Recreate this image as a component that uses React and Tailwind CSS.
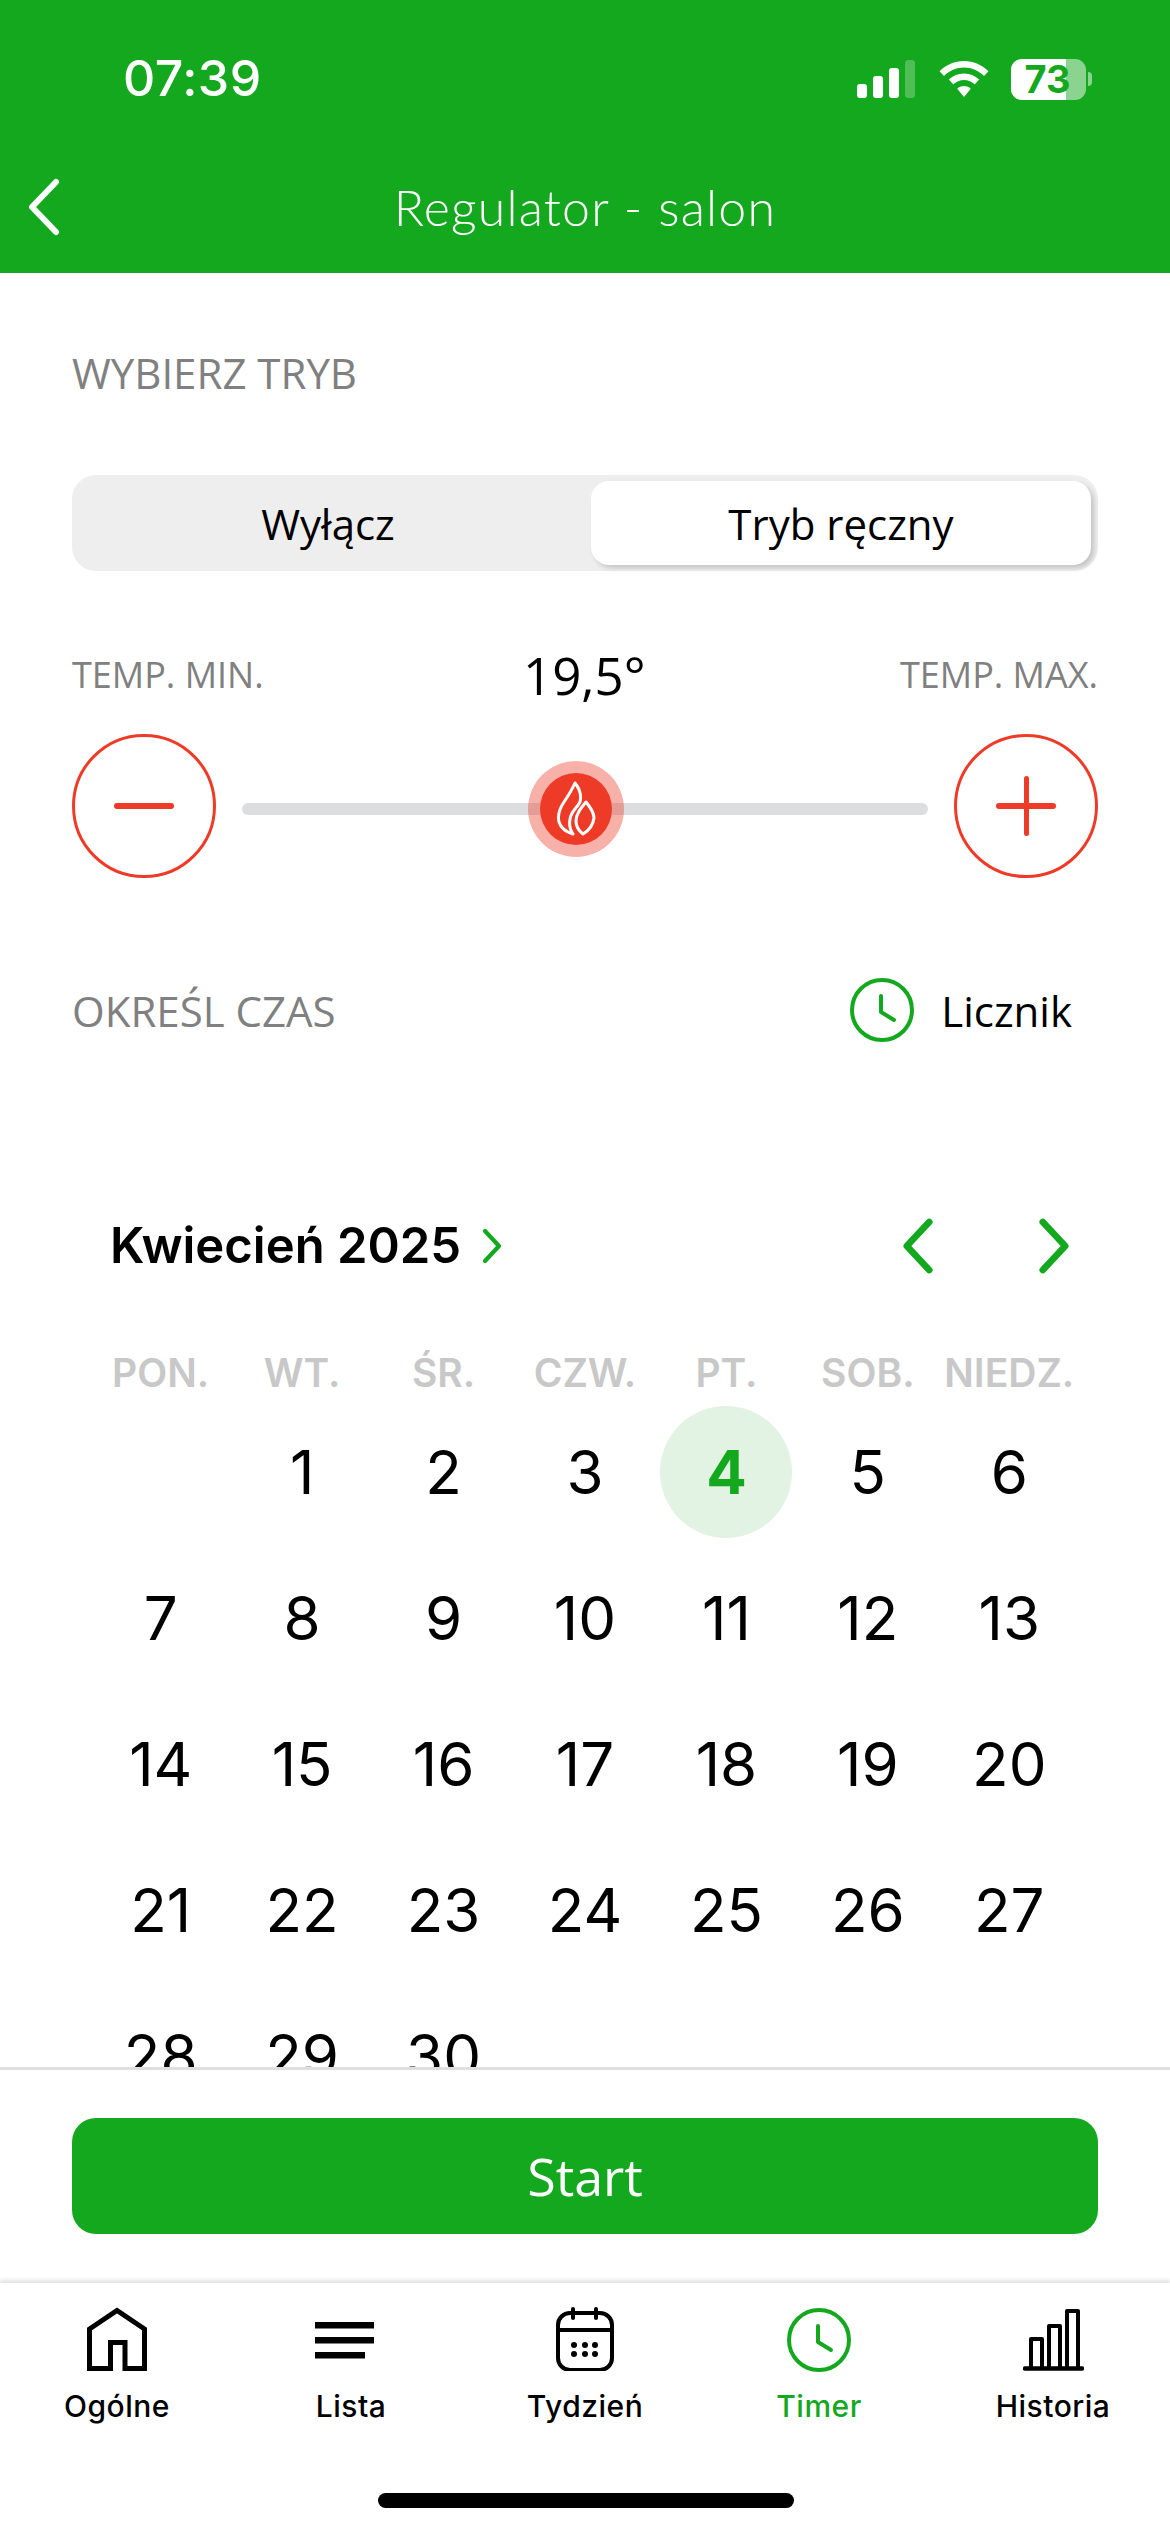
const weekDays = ['PON.', 'WT.', 'ŚR.', 'CZW.', 'PT.', 'SOB.', 'NIEDZ.']
const days = ['', 1, 2, 3, 4, 5, 6, 7, 8, 9, 10, 11, 12, 13, 14, 15, 16, 17, 18, 19, 20, 21, 22, 23, 24, 25, 26, 27, 28, 29, 30]

function Chevron({ dir = 'right', className = '' }) {
  return (
    <svg viewBox="0 0 20 36" fill="none" className={className}>
      <path
        d={dir === 'right' ? 'M3 3 L17 18 L3 33' : 'M17 3 L3 18 L17 33'}
        stroke="currentColor"
        strokeWidth="4.200"
        strokeLinecap="round"
        strokeLinejoin="round"
      />
    </svg>
  )
}

function ClockIcon({ className = '' }) {
  return (
    <svg viewBox="0 0 64 64" fill="none" className={className}>
      <circle cx="32" cy="32" r="30" stroke="currentColor" strokeWidth="4" />
      <path d="M31 18V34L44 42" stroke="currentColor" strokeWidth="4" strokeLinecap="round" strokeLinejoin="round" />
    </svg>
  )
}

function StatusBar() {
  return (
    <div className="h-[154px] flex items-start justify-between pl-[123px] pr-[78px] pt-[53px] text-white">
      <span className="text-[50px] leading-[50px] font-medium font-['Inter',sans-serif] tracking-[0.5px]">07:39</span>
      <div className="flex items-center gap-[22px] h-[44px] mt-[4px]">
        <svg viewBox="0 0 60 38" className="w-[60px] h-[38px]">
          <rect x="0" y="24" width="10" height="14" rx="3" fill="#fff" />
          <rect x="16" y="16" width="10" height="22" rx="3" fill="#fff" />
          <rect x="32" y="8" width="10" height="30" rx="3" fill="#fff" />
          <rect x="48" y="0" width="10" height="38" rx="3" fill="#fff" fillOpacity="0.25" />
        </svg>
        <svg viewBox="0 0 50 36" className="w-[50px] h-[36px]">
          <path d="M25 0C15.500 0 7 3.800 0.500 10.200L5 15C10.300 9.800 17.300 6.600 25 6.600C32.700 6.600 39.700 9.800 45 15L49.500 10.200C43 3.800 34.500 0 25 0Z" fill="#fff" />
          <path d="M25 12.500C19.200 12.500 14 14.800 9.900 18.600L14.300 23.400C17.200 20.700 20.900 19.100 25 19.100C29.100 19.100 32.800 20.700 35.700 23.400L40.100 18.600C36 14.800 30.800 12.500 25 12.500Z" fill="#fff" />
          <path d="M25 25C22.400 25 20 26 18.200 27.700L25 36L31.800 27.700C30 26 27.600 25 25 25Z" fill="#fff" />
        </svg>
        <div className="relative flex items-center">
          <div className="relative w-[75px] h-[41px] rounded-[11px] bg-white/50">
            <div className="h-full w-[55px] rounded-l-[11px] bg-white" />
            <span className="absolute inset-0 flex items-center justify-center pr-[2px] text-[38px] leading-none font-bold font-['Inter',sans-serif] text-[#14a81f]">73</span>
          </div>
          <div className="ml-[2px] w-[4px] h-[14px] rounded-r-full bg-white/50" />
        </div>
      </div>
    </div>
  )
}

function Header() {
  return (
    <div className="bg-[#14a81f] h-[273px] shrink-0">
      <StatusBar />
      <div className="relative h-[119px] flex items-start justify-center pt-[28px]">
        <svg viewBox="0 0 34 58" fill="none" className="absolute left-[27px] top-[24px] w-[34px] h-[58px]">
          <path d="M29 4 L5 29 L29 54" stroke="#fff" strokeWidth="6" strokeLinecap="round" strokeLinejoin="round" />
        </svg>
        <span className="text-white text-[50px] leading-[50px] font-light font-['Lato',sans-serif] tracking-[1.2px]">Regulator - salon</span>
      </div>
    </div>
  )
}

function FlameIcon() {
  return (
    <svg viewBox="0 0 40 55" fill="none" className="w-[40px] h-[55px]">
      <path
        d="M19 2C23 7 26 13 24 21C21 27 15 30 14 38C13 44 14 49 17 53C10 51 5 47 3 41C1 33 4 27 8 21C12 15 16 9 19 2Z"
        stroke="#fff"
        strokeWidth="3"
        strokeLinejoin="round"
      />
      <path
        d="M30 21C34 26 38 31 38 37C37 45 32 50 27 53C23 50 20 46 20 40C20 33 25 27 30 21Z"
        stroke="#fff"
        strokeWidth="3"
        strokeLinejoin="round"
      />
    </svg>
  )
}

function TempControl() {
  return (
    <div className="mt-[74px]">
      <div className="flex items-center justify-between h-[60px]">
        <span className="text-[36px] text-[#808080]">TEMP. MIN.</span>
        <span className="text-[51px] text-black ml-[5px]">19,5°</span>
        <span className="text-[36px] text-[#808080]">TEMP. MAX.</span>
      </div>
      <div className="flex items-center justify-between mt-[29px]">
        <div className="w-[144px] h-[144px] rounded-full border-[3px] border-[#ee3b28] flex items-center justify-center">
          <div className="w-[60px] h-[6px] rounded-full bg-[#ee3b28]" />
        </div>
        <div className="relative w-[686px] h-[12px] mt-[5px] rounded-full bg-[#dcdddf]">
          <div className="absolute left-[286px] top-[-42px] w-[96px] h-[96px] rounded-full bg-[#ee3b28]/40 flex items-center justify-center">
            <div className="w-[72px] h-[72px] rounded-full bg-[#ee3b28] flex items-center justify-center">
              <FlameIcon />
            </div>
          </div>
        </div>
        <div className="relative w-[144px] h-[144px] rounded-full border-[3px] border-[#ee3b28] flex items-center justify-center">
          <div className="w-[60px] h-[6px] rounded-full bg-[#ee3b28]" />
          <div className="absolute w-[5px] h-[60px] rounded-full bg-[#ee3b28]" />
        </div>
      </div>
    </div>
  )
}

function Calendar() {
  return (
    <div className="mt-[171px]">
      <div className="flex items-center justify-between pl-[38px] pr-[28px] h-[60px]">
        <div className="flex items-center gap-[20px]">
          <span className="text-[49px] font-semibold text-black font-['Inter',sans-serif]">Kwiecień 2025</span>
          <Chevron className="w-[22px] h-[36px] text-[#14a81f]" />
        </div>
        <div className="flex items-center gap-[104px]">
          <Chevron dir="left" className="w-[32px] h-[58px] text-[#14a81f]" />
          <Chevron className="w-[32px] h-[58px] text-[#14a81f]" />
        </div>
      </div>
      <div className="grid grid-cols-7 mt-[75px] mx-[18px] font-['Inter',sans-serif]">
        {weekDays.map((d) => (
          <div key={d} className="text-center whitespace-nowrap text-[39px] leading-[44px] font-semibold text-[#c8c8c8]">{d}</div>
        ))}
      </div>
      <div className="grid grid-cols-7 mt-[4px] mx-[18px] font-['Inter',sans-serif]">
        {days.map((d, i) => (
          <div key={i} className="h-[146px] flex items-center justify-center">
            {d === 4 ? (
              <div className="w-[132px] h-[132px] rounded-full bg-[#e2f3e3] flex items-center justify-center text-[60px] font-bold text-[#14a81f]">{d}</div>
            ) : (
              <span className="text-[60px] text-black">{d}</span>
            )}
          </div>
        ))}
      </div>
    </div>
  )
}

function TabIcon({ name }) {
  if (name === 'home') {
    return (
      <svg viewBox="0 0 60 66" fill="none" className="w-[60px] h-[66px]">
        <path d="M2.500 63.500V24L30 5.500L57.500 24V63.500H38V37.500H23.500V63.500Z" stroke="currentColor" strokeWidth="5" />
      </svg>
    )
  }
  if (name === 'list') {
    return (
      <svg viewBox="0 0 72 66" className="w-[72px] h-[66px]">
        <rect x="0" y="17" width="59" height="6.500" fill="currentColor" />
        <rect x="0" y="32" width="59" height="6.500" fill="currentColor" />
        <rect x="0" y="47" width="50" height="6.500" fill="currentColor" />
      </svg>
    )
  }
  if (name === 'calendar') {
    return (
      <svg viewBox="0 0 60 66" fill="none" className="w-[60px] h-[66px]">
        <rect x="3" y="8" width="54" height="57" rx="12" stroke="currentColor" strokeWidth="4" />
        <path d="M3 25H57" stroke="currentColor" strokeWidth="4" />
        <path d="M18 4V13M41 4V13" stroke="currentColor" strokeWidth="4" strokeLinecap="round" />
        {[19, 30, 40].map((x) => [40, 49].map((y) => <circle key={`${x}-${y}`} cx={x} cy={y} r="3" fill="currentColor" />))}
      </svg>
    )
  }
  if (name === 'clock') {
    return <ClockIcon className="w-[64px] h-[64px] mt-[4px]" />
  }
  return (
    <svg viewBox="0 0 61 66" fill="none" className="w-[61px] h-[66px]">
      <path d="M8 63V34H19V63M26 63V21H37V63M44 63V6H55V63" stroke="currentColor" strokeWidth="4" strokeLinejoin="round" />
      <path d="M2 63.500H59" stroke="currentColor" strokeWidth="4.500" strokeLinecap="round" />
    </svg>
  )
}

const tabs = [
  { label: 'Ogólne', icon: 'home' },
  { label: 'Lista', icon: 'list' },
  { label: 'Tydzień', icon: 'calendar' },
  { label: 'Timer', icon: 'clock', active: true },
  { label: 'Historia', icon: 'bars' },
]

export default function App() {
  return (
    <div className="w-[1170px] h-[2532px] bg-white flex flex-col overflow-hidden font-['Open_Sans',sans-serif]">
      <Header />
      <div className="flex-1 min-h-0 overflow-hidden px-[72px] pt-[78px]">
        <div className="text-[42px] leading-[44px] text-[#808080]">WYBIERZ TRYB</div>
        <div className="mt-[80px] h-[96px] rounded-[24px] bg-[#eeeeee] flex p-[6px] gap-[13px]">
          <div className="w-[500px] flex items-center justify-center text-[42px] text-black">Wyłącz</div>
          <div className="w-[500px] rounded-[18px] bg-white shadow-[3px_3px_5px_rgba(0,0,0,0.18)] flex items-center justify-center text-[42px] text-black">Tryb ręczny</div>
        </div>
        <TempControl />
        <div className="flex items-center justify-between mt-[97px] pr-[26px] h-[70px]">
          <span className="text-[42px] text-[#808080]">OKREŚL CZAS</span>
          <div className="flex items-center gap-[27px]">
            <ClockIcon className="w-[64px] h-[64px] text-[#14a81f]" />
            <span className="text-[42px] text-black">Licznik</span>
          </div>
        </div>
        <Calendar />
      </div>
      <div className="h-[216px] shrink-0 border-t-[3px] border-[#dfdfdf] bg-white px-[72px] pt-[48px]">
        <div className="h-[116px] rounded-[24px] bg-[#14a81f] flex items-center justify-center text-white text-[52px]">Start</div>
      </div>
      <div className="h-[249px] shrink-0 bg-white shadow-[0_-3px_4px_rgba(0,0,0,0.12)] relative">
        <div className="grid grid-cols-5 pt-[22px]">
          {tabs.map((t) => (
            <div key={t.label} className={`flex flex-col items-center ${t.active ? 'text-[#14a81f]' : 'text-black'}`}>
              <div className="h-[66px] flex items-center justify-center"><TabIcon name={t.icon} /></div>
              <span className="mt-[17px] text-[30px] leading-[36px] font-[450] font-['Inter',sans-serif] tracking-[0.5px]">{t.label}</span>
            </div>
          ))}
        </div>
        <div className="absolute left-[378px] bottom-[24px] w-[416px] h-[15px] rounded-full bg-black" />
      </div>
    </div>
  )
}
